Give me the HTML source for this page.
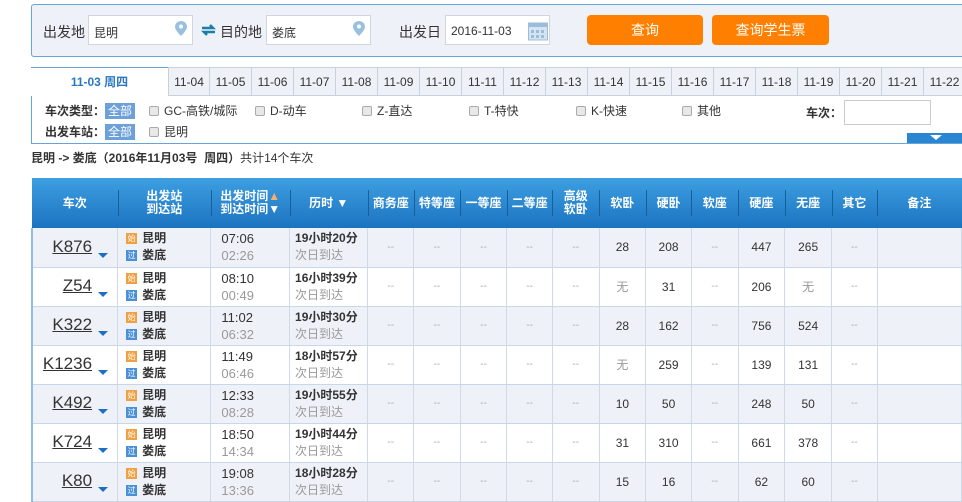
<!DOCTYPE html>
<html><head><meta charset="utf-8"><style>
*{margin:0;padding:0;box-sizing:border-box}
body{width:962px;height:500px;overflow:hidden;background:#fff;font-family:"Liberation Sans","Noto Sans CJK SC",sans-serif;font-size:12px;color:#333;position:relative}
.abs{position:absolute}
.search{left:31px;top:4px;width:940px;height:53px;background:#eef1f8;border:1px solid #65a5d8;border-radius:3px}
.lbl{font-size:14px;color:#333;top:22px}
.inp{background:#fff;border:1px solid #cfd6e0;height:30px;top:15px;font-size:12px;padding:8px 5px;color:#333}
.pin{width:12px;height:15px;top:21px}
.btn{top:15px;height:30px;background:#ff8000;border-radius:4px;color:#fff;font-size:14px;text-align:center;line-height:30px}
.tabs{left:31px;top:67px;width:940px;height:77px;border:1px solid #65a5d8;border-top:none}
.tab{top:67px;height:29px;border:1px solid #c8d2dc;border-left:none;background:#eef1f8;text-align:center;line-height:28px;font-size:12px;color:#333;width:42px}
.cb{display:inline-block;width:10px;height:10px;border:1px solid #aaa;background:#e8e8e8;border-radius:2px;vertical-align:-1px;margin-right:5px}
.tag{background:#6d9fd8;color:#fff;padding:1px 3px;font-size:12px;font-weight:normal}
table{position:absolute;left:31px;top:178px;border-collapse:collapse;table-layout:fixed}
th{height:50px;background:linear-gradient(#3e9fe2,#1b73bf);color:#fff;font-size:12px;font-weight:bold;line-height:13px;position:relative}
th+th:before{content:"";position:absolute;left:0;top:12px;height:26px;border-left:1px solid #1a5f9c}
td{height:39px;border-right:1px solid #d0dae6;border-bottom:1px solid #c8d8e8;text-align:center;font-size:12px;color:#333;padding:0}
tr.o td{background:#eef1f8}
td.d{color:#aaa;font-size:10px}
td.first{border-left:2px solid #8fbfe6}
.tn{font-size:17px;color:#333;text-decoration:underline;display:inline-block;width:50px;text-align:right}
.ar{display:inline-block;width:0;height:0;border-left:5px solid transparent;border-right:5px solid transparent;border-top:5px solid #1d6fc6;vertical-align:-6px;margin-left:6px}
.st{text-align:left;padding-left:8px;font-weight:bold;font-size:12px;line-height:17px}
.ic{display:inline-block;width:11px;height:11px;font-size:8px;line-height:11px;color:#fff;text-align:center;vertical-align:1px;margin-right:5px;font-weight:normal}
.tm{text-align:left;padding-left:10px;font-size:13px;line-height:17px}
.g{color:#999}
.du{text-align:left;padding-left:5px;line-height:17px}
</style></head><body>
<div class="abs search"></div>
<div class="abs lbl" style="left:43px">出发地</div>
<div class="abs inp" style="left:88px;width:105px">昆明</div>
<svg class="abs pin" style="left:175px" viewBox="0 0 12 15"><path d="M6 0C2.7 0 0 2.5 0 5.8 0 9.5 6 15 6 15s6-5.5 6-9.2C12 2.5 9.3 0 6 0z" fill="#9ac0e0"/><circle cx="6" cy="5.5" r="2" fill="#fff"/></svg>
<svg class="abs" style="left:201px;top:24px" width="15" height="12" viewBox="0 0 15 12"><path d="M1 4h11l-3-3M14 8H3l3 3" stroke="#1a7fa8" stroke-width="2.5" fill="none"/></svg>
<div class="abs lbl" style="left:220px">目的地</div>
<div class="abs inp" style="left:266px;width:105px">娄底</div>
<svg class="abs pin" style="left:353px" viewBox="0 0 12 15"><path d="M6 0C2.7 0 0 2.5 0 5.8 0 9.5 6 15 6 15s6-5.5 6-9.2C12 2.5 9.3 0 6 0z" fill="#9ac0e0"/><circle cx="6" cy="5.5" r="2" fill="#fff"/></svg>
<div class="abs lbl" style="left:399px">出发日</div>
<div class="abs inp" style="left:445px;width:105px">2016-11-03</div>
<svg class="abs" style="left:528px;top:20px" width="20" height="21" viewBox="0 0 20 21"><rect x="0.5" y="3" width="19" height="17" fill="#d6e4f2" stroke="#9cbcdc"/><rect x="0.5" y="3" width="19" height="4" fill="#9cbcdc"/><g fill="#9cbcdc"><rect x="3" y="10" width="3" height="3"/><rect x="8" y="10" width="3" height="3"/><rect x="13" y="10" width="3" height="3"/><rect x="3" y="15" width="3" height="3"/><rect x="8" y="15" width="3" height="3"/><rect x="13" y="15" width="3" height="3"/></g></svg>
<div class="abs btn" style="left:587px;width:116px">查询</div>
<div class="abs btn" style="left:712px;width:117px">查询学生票</div>

<div class="abs tabs"></div>
<div class="abs" style="left:31px;top:67px;width:137px;height:29px;background:#fff;border-top:1px solid #65a5d8;text-align:center;line-height:28px;color:#2a78c0;font-weight:bold">11-03 周四</div>
<div class="abs tab" style="left:168px;border-left:1px solid #c8d2dc">11-04</div>
<div class="abs tab" style="left:210px">11-05</div>
<div class="abs tab" style="left:252px">11-06</div>
<div class="abs tab" style="left:294px">11-07</div>
<div class="abs tab" style="left:336px">11-08</div>
<div class="abs tab" style="left:378px">11-09</div>
<div class="abs tab" style="left:420px">11-10</div>
<div class="abs tab" style="left:462px">11-11</div>
<div class="abs tab" style="left:504px">11-12</div>
<div class="abs tab" style="left:546px">11-13</div>
<div class="abs tab" style="left:588px">11-14</div>
<div class="abs tab" style="left:630px">11-15</div>
<div class="abs tab" style="left:672px">11-16</div>
<div class="abs tab" style="left:714px">11-17</div>
<div class="abs tab" style="left:756px">11-18</div>
<div class="abs tab" style="left:798px">11-19</div>
<div class="abs tab" style="left:840px">11-20</div>
<div class="abs tab" style="left:882px">11-21</div>
<div class="abs tab" style="left:924px">11-22</div>

<div class="abs" style="left:45px;top:102px;font-weight:bold">车次类型：<span class="tag">全部</span></div>
<div class="abs" style="left:149px;top:102px"><span class="cb"></span>GC-高铁/城际</div>
<div class="abs" style="left:255px;top:102px"><span class="cb"></span>D-动车</div>
<div class="abs" style="left:362px;top:102px"><span class="cb"></span>Z-直达</div>
<div class="abs" style="left:469px;top:102px"><span class="cb"></span>T-特快</div>
<div class="abs" style="left:576px;top:102px"><span class="cb"></span>K-快速</div>
<div class="abs" style="left:682px;top:102px"><span class="cb"></span>其他</div>
<div class="abs" style="left:806px;top:104px;font-weight:bold">车次：</div>
<div class="abs" style="left:844px;top:100px;width:87px;height:25px;border:1px solid #ccc;background:#fff"></div>
<div class="abs" style="left:45px;top:123px;font-weight:bold">出发车站：<span class="tag">全部</span></div>
<div class="abs" style="left:149px;top:123px"><span class="cb"></span>昆明</div>
<div class="abs" style="left:907px;top:133px;width:60px;height:10px;background:#2a86d0"></div>
<div class="abs" style="left:930px;top:135px;width:0;height:0;border-left:6px solid transparent;border-right:6px solid transparent;border-top:5px solid #fff"></div>

<div class="abs" style="left:31px;top:149px;font-size:12px"><b>昆明 -&gt; 娄底（2016年11月03号 &nbsp;周四）</b>共计14个车次</div>

<table>
<colgroup><col style="width:86px"><col style="width:94px"><col style="width:79px"><col style="width:79px"><col style="width:46px"><col style="width:47px"><col style="width:47px"><col style="width:46px"><col style="width:47px"><col style="width:47px"><col style="width:46px"><col style="width:47px"><col style="width:47px"><col style="width:47px"><col style="width:46px"><col style="width:85px"></colgroup>
<tr><th>车次</th><th>出发站<br>到达站</th><th>出发时间<span style="color:#f5b070">▲</span><br>到达时间▼</th><th>历时 ▼</th><th>商务座</th><th>特等座</th><th>一等座</th><th>二等座</th><th>高级<br>软卧</th><th>软卧</th><th>硬卧</th><th>软座</th><th>硬座</th><th>无座</th><th>其它</th><th>备注</th></tr>
<tr class="o"><td class="first"><span class="tn">K876</span><span class="ar"></span></td><td class="st"><span class="ic" style="background:#f0a040">始</span>昆明<br><span class="ic" style="background:#4a90d8">过</span>娄底</td><td class="tm">07:06<br><span class="g">02:26</span></td><td class="du"><b>19小时20分</b><br><span class="g">次日到达</span></td><td class="d">--</td><td class="d">--</td><td class="d">--</td><td class="d">--</td><td class="d">--</td><td>28</td><td>208</td><td class="d">--</td><td>447</td><td>265</td><td class="d">--</td><td></td></tr>
<tr><td class="first"><span class="tn">Z54</span><span class="ar"></span></td><td class="st"><span class="ic" style="background:#f0a040">始</span>昆明<br><span class="ic" style="background:#4a90d8">过</span>娄底</td><td class="tm">08:10<br><span class="g">00:49</span></td><td class="du"><b>16小时39分</b><br><span class="g">次日到达</span></td><td class="d">--</td><td class="d">--</td><td class="d">--</td><td class="d">--</td><td class="d">--</td><td class="g">无</td><td>31</td><td class="d">--</td><td>206</td><td class="g">无</td><td class="d">--</td><td></td></tr>
<tr class="o"><td class="first"><span class="tn">K322</span><span class="ar"></span></td><td class="st"><span class="ic" style="background:#f0a040">始</span>昆明<br><span class="ic" style="background:#4a90d8">过</span>娄底</td><td class="tm">11:02<br><span class="g">06:32</span></td><td class="du"><b>19小时30分</b><br><span class="g">次日到达</span></td><td class="d">--</td><td class="d">--</td><td class="d">--</td><td class="d">--</td><td class="d">--</td><td>28</td><td>162</td><td class="d">--</td><td>756</td><td>524</td><td class="d">--</td><td></td></tr>
<tr><td class="first"><span class="tn">K1236</span><span class="ar"></span></td><td class="st"><span class="ic" style="background:#f0a040">始</span>昆明<br><span class="ic" style="background:#4a90d8">过</span>娄底</td><td class="tm">11:49<br><span class="g">06:46</span></td><td class="du"><b>18小时57分</b><br><span class="g">次日到达</span></td><td class="d">--</td><td class="d">--</td><td class="d">--</td><td class="d">--</td><td class="d">--</td><td class="g">无</td><td>259</td><td class="d">--</td><td>139</td><td>131</td><td class="d">--</td><td></td></tr>
<tr class="o"><td class="first"><span class="tn">K492</span><span class="ar"></span></td><td class="st"><span class="ic" style="background:#f0a040">始</span>昆明<br><span class="ic" style="background:#4a90d8">过</span>娄底</td><td class="tm">12:33<br><span class="g">08:28</span></td><td class="du"><b>19小时55分</b><br><span class="g">次日到达</span></td><td class="d">--</td><td class="d">--</td><td class="d">--</td><td class="d">--</td><td class="d">--</td><td>10</td><td>50</td><td class="d">--</td><td>248</td><td>50</td><td class="d">--</td><td></td></tr>
<tr><td class="first"><span class="tn">K724</span><span class="ar"></span></td><td class="st"><span class="ic" style="background:#f0a040">始</span>昆明<br><span class="ic" style="background:#4a90d8">过</span>娄底</td><td class="tm">18:50<br><span class="g">14:34</span></td><td class="du"><b>19小时44分</b><br><span class="g">次日到达</span></td><td class="d">--</td><td class="d">--</td><td class="d">--</td><td class="d">--</td><td class="d">--</td><td>31</td><td>310</td><td class="d">--</td><td>661</td><td>378</td><td class="d">--</td><td></td></tr>
<tr class="o"><td class="first"><span class="tn">K80</span><span class="ar"></span></td><td class="st"><span class="ic" style="background:#f0a040">始</span>昆明<br><span class="ic" style="background:#4a90d8">过</span>娄底</td><td class="tm">19:08<br><span class="g">13:36</span></td><td class="du"><b>18小时28分</b><br><span class="g">次日到达</span></td><td class="d">--</td><td class="d">--</td><td class="d">--</td><td class="d">--</td><td class="d">--</td><td>15</td><td>16</td><td class="d">--</td><td>62</td><td>60</td><td class="d">--</td><td></td></tr>
</table>
</body></html>
